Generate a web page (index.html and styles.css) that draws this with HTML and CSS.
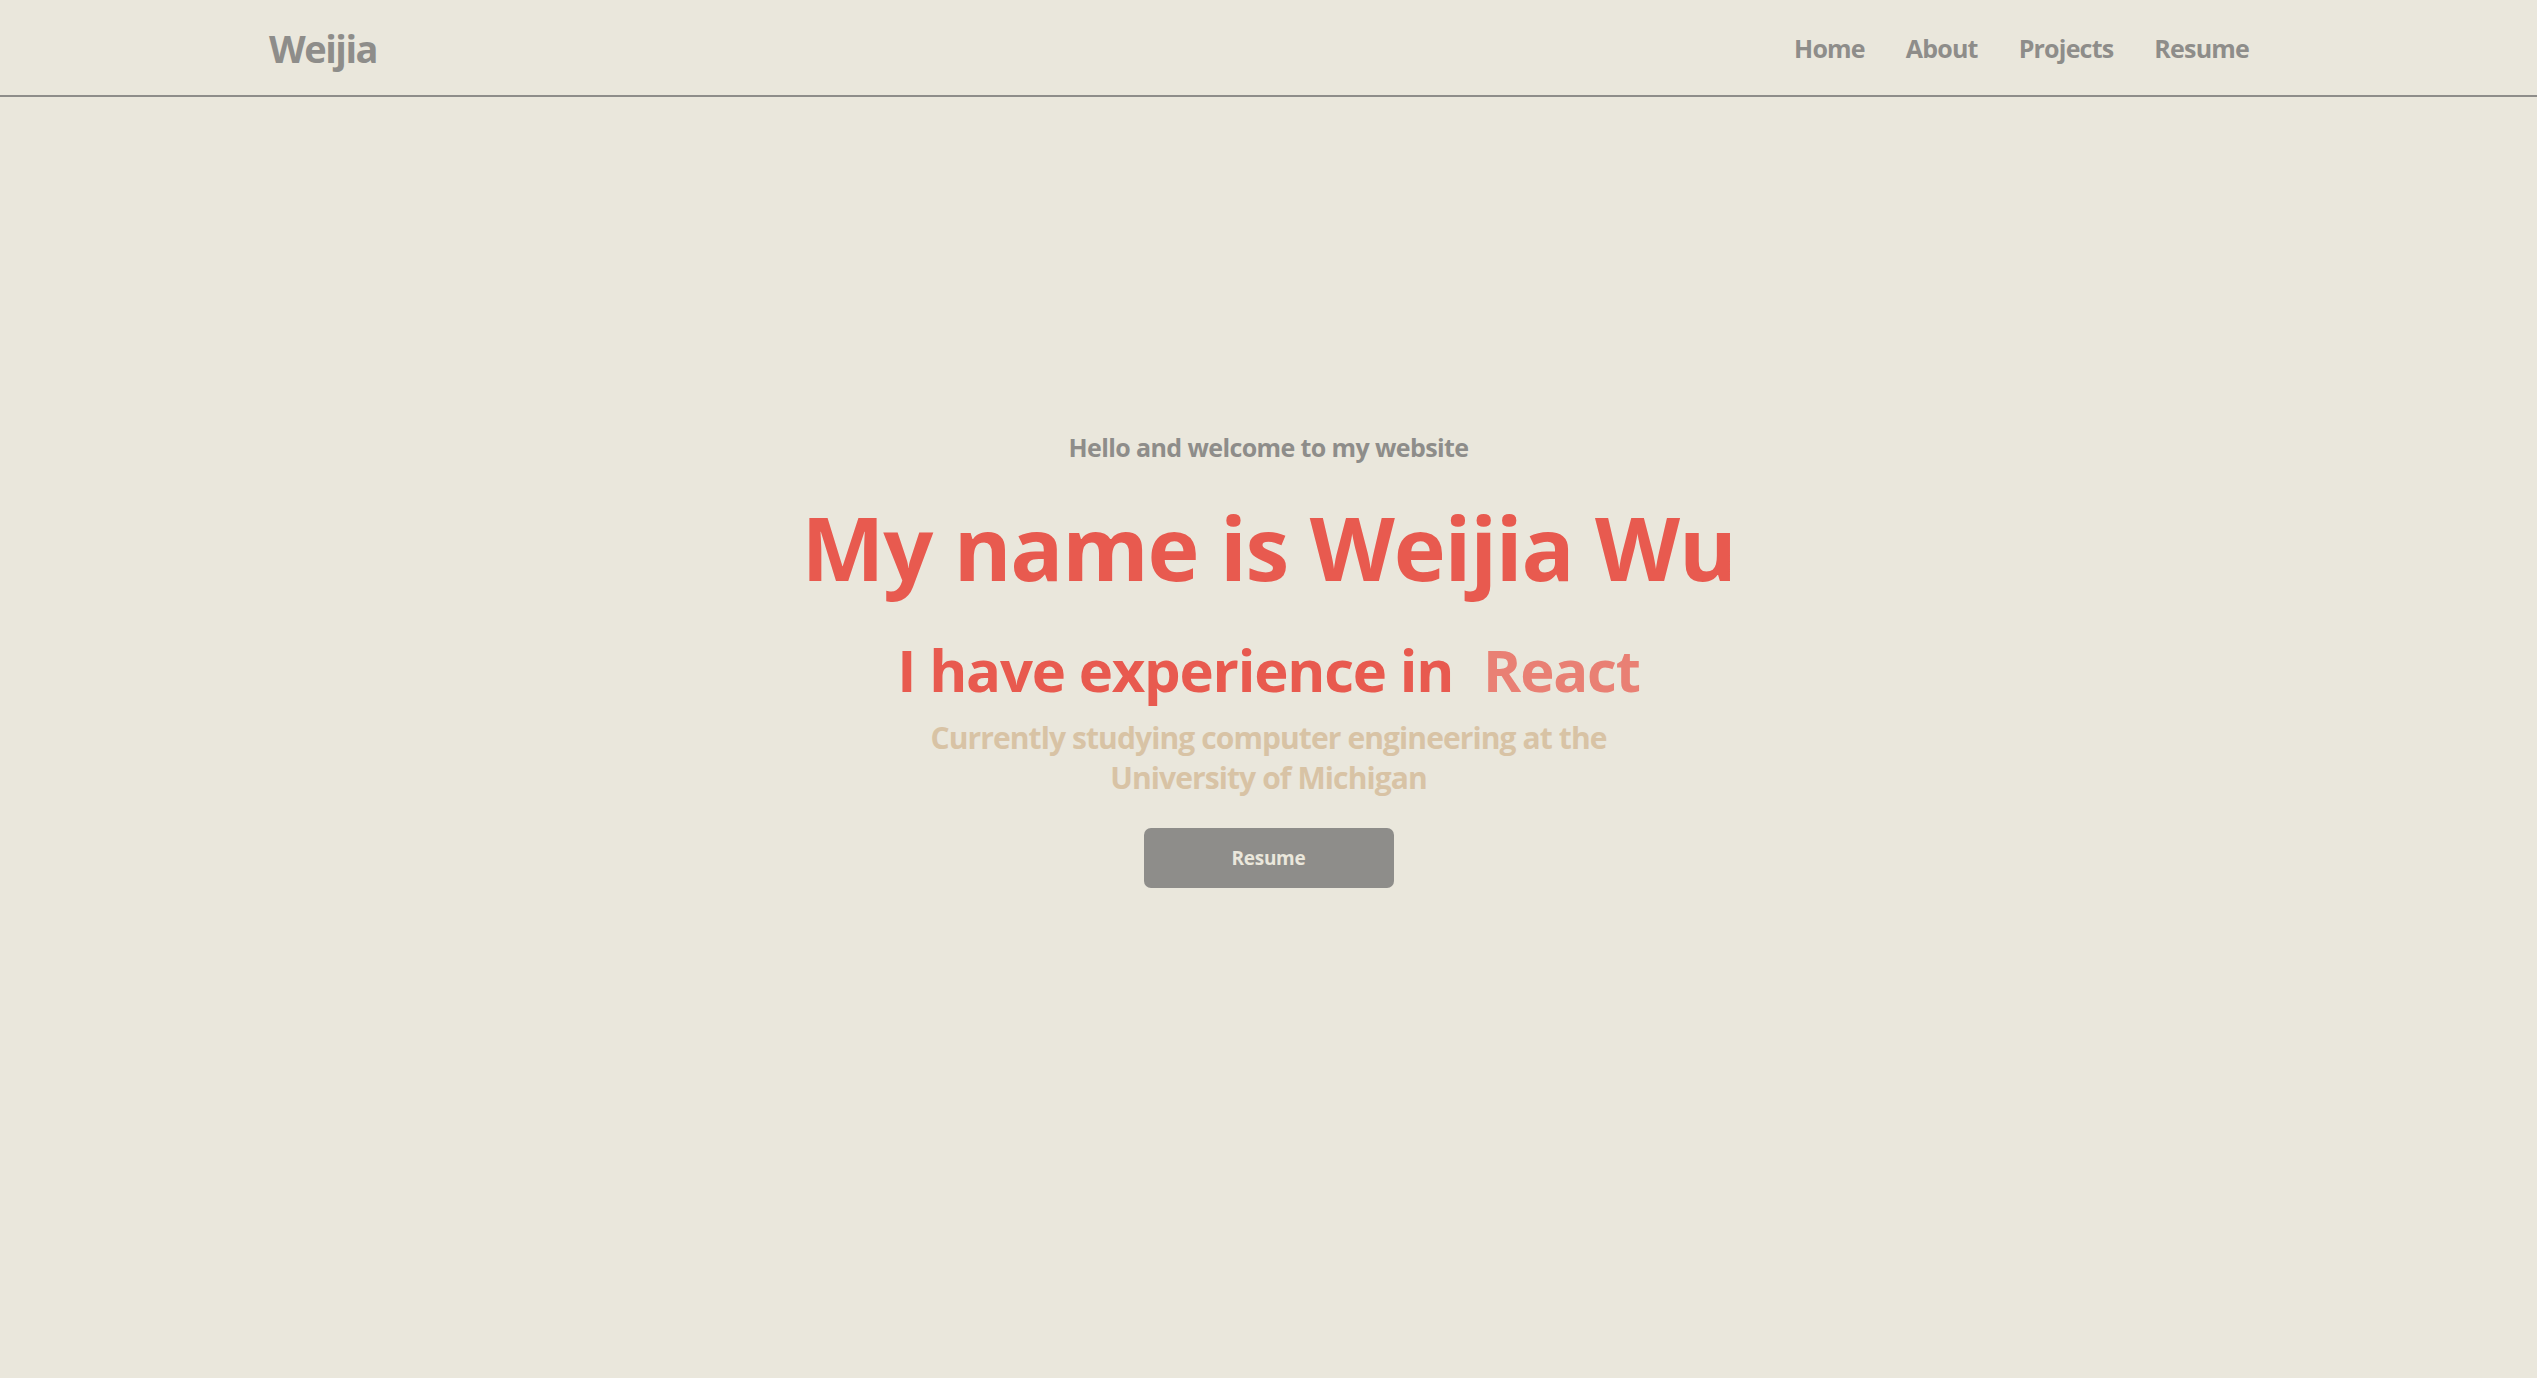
FILE: index.html
```html
<!DOCTYPE html>
<html lang="en">
<head>
<meta charset="utf-8">
<title>Weijia</title>
<link rel="stylesheet" href="styles.css">
</head>
<body>
<header class="topbar">
  <a class="logo" href="#">Weijia</a>
  <nav class="nav">
    <a href="#">Home</a>
    <a href="#">About</a>
    <a href="#">Projects</a>
    <a href="#">Resume</a>
  </nav>
</header>
<main class="hero">
  <p class="hello">Hello and welcome to my website</p>
  <h1 class="name">My name is Weijia Wu</h1>
  <h2 class="exp">I have experience in <span class="tech">React</span></h2>
  <p class="study">Currently studying computer engineering at the<br>University of Michigan</p>
  <a class="btn" href="#">Resume</a>
</main>
</body>
</html>
```
FILE: styles.css
```css
* { box-sizing: border-box; }
html, body { margin: 0; padding: 0; }
body {
  background: #EAE7DC;
  font-family: "Open Sans", "Noto Sans", sans-serif;
  font-weight: 700;
  min-height: 100vh;
}
a { text-decoration: none; }
.topbar {
  height: 97px;
  border-bottom: 2px solid #8E8D8A;
  display: flex;
  align-items: center;
  justify-content: space-between;
  padding: 0 288px 0 269px;
}
.logo {
  color: #8E8D8A;
  font-size: 38px;
  font-weight: 700;
  letter-spacing: -1.5px;
}
.nav { display: flex; gap: 41px; }
.nav a {
  color: #8E8D8A;
  font-size: 25px;
  font-weight: 700;
  letter-spacing: -0.8px;
}
.hero {
  display: flex;
  flex-direction: column;
  align-items: center;
  text-align: center;
  padding-top: 333px;
}
.hello {
  margin: 0;
  color: #8E8D8A;
  font-size: 25px;
  line-height: 34px;
  letter-spacing: -0.6px;
}
.name {
  margin: 28px 0 0;
  color: #E85A4F;
  font-size: 88px;
  line-height: 110px;
  letter-spacing: -1.2px;
}
.exp {
  margin: 30px 0 0;
  color: #E85A4F;
  font-size: 58px;
  line-height: 76px;
  letter-spacing: -1.2px;
}
.tech { color: #E98074; margin-left: 16px; }
.study {
  margin: 10px 0 0;
  color: #D8C3A5;
  font-size: 30px;
  line-height: 40px;
  letter-spacing: -0.9px;
}
.btn {
  margin-top: 30px;
  width: 250px;
  height: 60px;
  border-radius: 7px;
  background: #8E8D8A;
  color: #EAE7DC;
  font-size: 19px;
  letter-spacing: -0.3px;
  display: flex;
  align-items: center;
  justify-content: center;
}
```
